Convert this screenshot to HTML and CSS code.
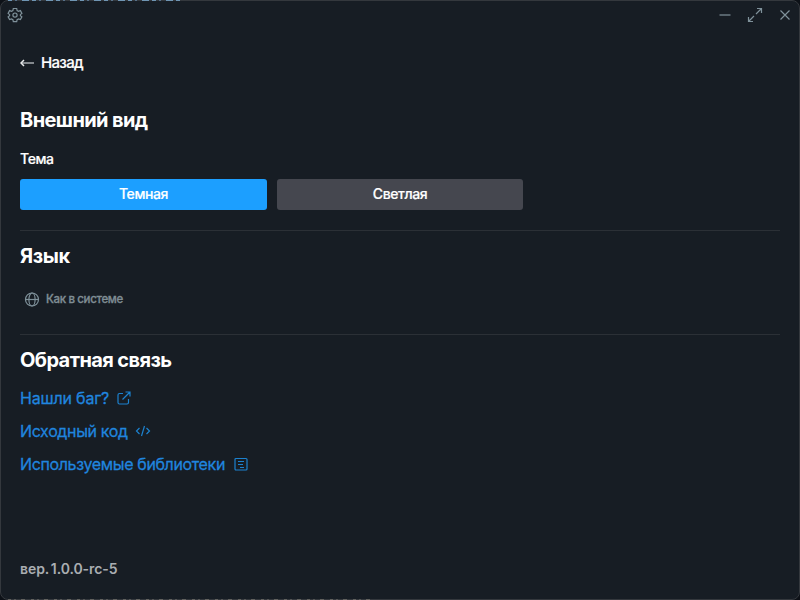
FILE: index.html
```html
<!DOCTYPE html>
<html lang="ru">
<head>
<meta charset="utf-8">
<title>Настройки</title>
<link rel="stylesheet" href="styles.css">
</head>
<body>
<div class="window">
  <header class="titlebar">
    <svg class="icon" width="16" height="16" viewBox="0 0 16 16"><path d="M6.300 1.500h3.400l.4 2 1.400.8 1.900-.7 1.500 2.800-1.500 1.200v1l1.500 1.200-1.500 2.800-1.900-.7-1.400.8-.4 2H6.300l-.4-2-1.400-.8-1.900.7-1.500-2.800 1.500-1.200v-1L1.100 6.400l1.500-2.800 1.900.7 1.400-.8z"/><circle cx="8" cy="8.100" r="2.100"/></svg>
    <div class="controls">
      <svg class="icon" width="16" height="16" viewBox="0 0 16 16"><path d="M2.500 8h11"/></svg>
      <svg class="icon" width="16" height="16" viewBox="0 0 16 16"><path d="M9 7l5-5M10 1.500h4.500V6M7 9L2 14M1.500 10v4.500H6"/></svg>
      <svg class="icon" width="16" height="16" viewBox="0 0 16 16"><path d="M3.500 3.500l9 9M12.500 3.500l-9 9"/></svg>
    </div>
  </header>
  <main class="content">
    <a class="back"><svg class="arrow" width="15" height="12" viewBox="0 0 15 12"><path d="M1.500 6H14"/><path class="head" d="M4 3L1 6l3 3"/></svg><span>Назад</span></a>
    <section class="section">
      <h2>Внешний вид</h2>
      <div class="label">Тема</div>
      <div class="themes">
        <button class="theme active">Темная</button>
        <button class="theme">Светлая</button>
      </div>
    </section>
    <section class="section language">
      <h2>Язык</h2>
      <div class="select">
        <svg class="icon" width="16" height="16" viewBox="0 0 16 16"><circle cx="8" cy="8.500" r="6.500"/><ellipse cx="8" cy="8.500" rx="3.100" ry="6.500"/><path d="M1.500 8.500h13"/></svg>
        <span>Как в системе</span>
      </div>
    </section>
    <section class="section feedback">
      <h2>Обратная связь</h2>
      <a class="link bug"><span>Нашли баг?</span><svg width="16" height="16" viewBox="0 0 16 16"><path d="M7 3.500H3.500q-1.500 0-1.500 1.500v7.500Q2 14 3.500 14H11q1.500 0 1.500-1.500V9M6.500 9.500L14 2M9.500 2h4.500v4.500"/></svg></a>
      <a class="link code"><span>Исходный код</span><svg width="16" height="16" viewBox="0 0 16 16"><path d="M4.500 5L1.500 8l3 3M11.500 5l3 3-3 3M9.500 3L6.500 13"/></svg></a>
      <a class="link"><span>Используемые библиотеки</span><svg width="16" height="16" viewBox="0 0 16 16"><rect x="2" y="2.500" width="12" height="11.500" rx="1"/><path d="M5 5.500h6M5 8.500h5M7 11.500h4"/></svg></a>
    </section>
    <footer class="version">вер. 1.0.0-rc-5</footer>
  </main>
</div>
</body>
</html>
```
FILE: styles.css
```css
* { box-sizing: border-box; }
body {
  margin: 0;
  height: 600px;
  overflow: hidden;
  background: #0d1117;
  font-family: Inter, "Liberation Sans", sans-serif;
  color: #fff;
}
.window {
  height: 600px;
  display: flex;
  flex-direction: column;
  border: 1px solid #34383d;
  border-radius: 8px;
  background: #171d24;
}
/* Traces of the desktop text behind the window's top and bottom edges */
body::before, body::after {
  content: "";
  position: absolute;
  left: 8px;
  height: 1px;
}
body::before {
  top: 0;
  width: 174px;
  background: repeating-linear-gradient(90deg, #6f95b3 0 4px, #34383d 4px 7px, #57718a 7px 9px, #34383d 9px 14px, #6f95b3 14px 21px, #34383d 21px 24px);
}
body::after {
  top: 599px;
  width: 362px;
  background: repeating-linear-gradient(90deg, #62625f 0 3px, #34383d 3px 6px, #555656 6px 8px, #34383d 8px 13px, #62625f 13px 17px, #34383d 17px 23px);
}
.titlebar {
  height: 28px;
  padding: 0 6px;
  display: flex;
  align-items: center;
  justify-content: space-between;
}
.controls { display: flex; gap: 14px; }
svg { display: block; flex: none; fill: none; stroke: currentColor; stroke-width: 1.2; }
.icon { color: #7f919a; }
.content {
  flex: 1;
  display: flex;
  flex-direction: column;
  padding: 24px 19px 18px;
}
.back {
  display: flex;
  align-items: center;
  gap: 7px;
  height: 20px;
  font-size: 15px;
  line-height: 18px;
  font-weight: 500;
  letter-spacing: -0.68px;
}
.back span { -webkit-text-stroke: 0.2px; margin-top: -1px; }
.arrow { color: #a9adb1; stroke-width: 1.5; margin-right: -1px; }
.head { stroke: #e8eaeb; }
h2 {
  margin: 0;
  font-size: 20px;
  line-height: 24px;
  font-weight: 700;
  letter-spacing: -0.6px;
}
.section { border-bottom: 1px solid #2b3036; }
.section:first-of-type { margin-top: 35px; height: 123px; }
.label {
  margin-top: 17px;
  font-size: 14px;
  line-height: 20px;
  font-weight: 500;
  letter-spacing: -0.4px;
  -webkit-text-stroke: 0.2px;
}
.themes {
  display: grid;
  grid-template-columns: 247px 246px;
  gap: 10px;
  margin-top: 10px;
}
.theme {
  height: 31px;
  padding: 0 0 2px;
  border: 0;
  border-radius: 3px;
  background: #45474f;
  color: #fff;
  font: 500 14px/28px Inter, sans-serif;
  letter-spacing: -0.4px;
  -webkit-text-stroke: 0.2px;
}
.theme.active { background: #1c9fff; }
.language { height: 104px; padding-top: 13px; }
.language h2 { letter-spacing: -0.4px; }
.select {
  display: flex;
  align-items: center;
  gap: 6px;
  margin: 23px 0 0 4px;
  height: 16px;
  color: #7f8d94;
  font-size: 11.5px;
  font-weight: 500;
  letter-spacing: -0.36px;
  -webkit-text-stroke: 0.3px;
}
.select span { line-height: 14px; margin-top: -1px; }
.feedback { border: 0; padding-top: 13px; }
.link {
  display: flex;
  align-items: center;
  gap: 8px;
  width: max-content;
  height: 33px;
  color: #2085df;
  font-size: 16px;
  line-height: 20px;
  letter-spacing: -0.36px;
  -webkit-text-stroke: 0.3px;
}
.link span { margin-top: 1px; }
.link svg { color: #1c82cf; }
.bug { letter-spacing: -0.18px; }
.bug svg { margin-left: -1px; }
.code svg { margin-left: -1px; }
.feedback h2 { margin-bottom: 9px; }
.version {
  margin-top: auto;
  color: #aaaeb2;
  font-size: 14px;
  line-height: 24px;
  font-weight: 600;
  letter-spacing: -0.08px;
  word-spacing: -1.5px;
}
```
